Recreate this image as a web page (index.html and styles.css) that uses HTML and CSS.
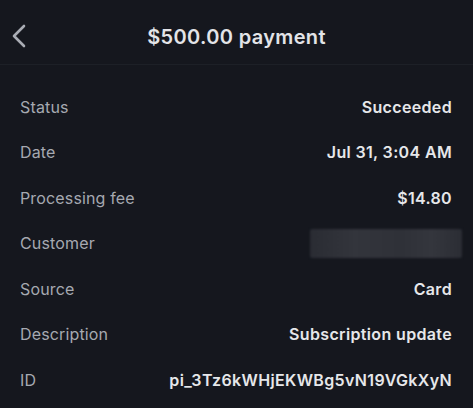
FILE: index.html
```html
<!DOCTYPE html>
<html>
<head>
<meta charset="utf-8">
<link rel="stylesheet" href="styles.css">
</head>
<body>
<div class="screen">
  <header class="topbar">
    <span class="back">
      <svg width="16" height="24" viewBox="0 0 16 24"><path d="M13 2 L3 12 L13 22" fill="none" stroke="#a9acb4" stroke-width="2.6" stroke-linecap="round" stroke-linejoin="round"/></svg>
    </span>
    <h1 class="title">$500.00 payment</h1>
  </header>
  <div class="list">
    <div class="row"><span class="label">Status</span><span class="value">Succeeded</span></div>
    <div class="row"><span class="label">Date</span><span class="value">Jul 31, 3:04 AM</span></div>
    <div class="row"><span class="label">Processing fee</span><span class="value">$14.80</span></div>
    <div class="row"><span class="label">Customer</span><span class="blur"></span></div>
    <div class="row"><span class="label">Source</span><span class="value">Card</span></div>
    <div class="row"><span class="label">Description</span><span class="value">Subscription update</span></div>
    <div class="row"><span class="label">ID</span><span class="value">pi_3Tz6kWHjEKWBg5vN19VGkXyN</span></div>
  </div>
</div>
</body>
</html>
```
FILE: styles.css
```css
html, body {
  margin: 0;
  padding: 0;
  background: #15171e;
}
.screen {
  width: 473px;
  height: 408px;
  background: #15171e;
  font-family: Inter, "Noto Sans", sans-serif;
  overflow: hidden;
}
.topbar {
  position: relative;
  height: 64px;
  border-bottom: 1px solid #1d2027;
  display: flex;
  align-items: center;
  justify-content: center;
}
.back {
  position: absolute;
  left: 11px;
  top: 24px;
  width: 16px;
  height: 24px;
  display: block;
}
.back svg { display: block; }
.title {
  margin: 0;
  font-size: 20px;
  font-weight: 600;
  color: #e3e4e8;
  letter-spacing: 0.35px;
  padding-top: 10px;
}
.list {
  padding-top: 19px;
}
.row {
  height: 45.5px;
  display: flex;
  align-items: center;
  justify-content: space-between;
  padding: 0 21px 0 20px;
}
.label {
  font-size: 16px;
  color: #a6a9b1;
  font-weight: 400;
  letter-spacing: 0.15px;
}
.value {
  font-size: 16px;
  color: #e6e7ea;
  font-weight: 600;
  letter-spacing: 0.35px;
}
.blur {
  width: 152px;
  height: 29px;
  margin-right: -10px;
  background: linear-gradient(90deg, #2a2c33 0%, #33353c 30%, #2f3138 60%, #34363d 80%, #2b2d34 100%);
  border-radius: 2px;
  filter: blur(1px);
}
```
